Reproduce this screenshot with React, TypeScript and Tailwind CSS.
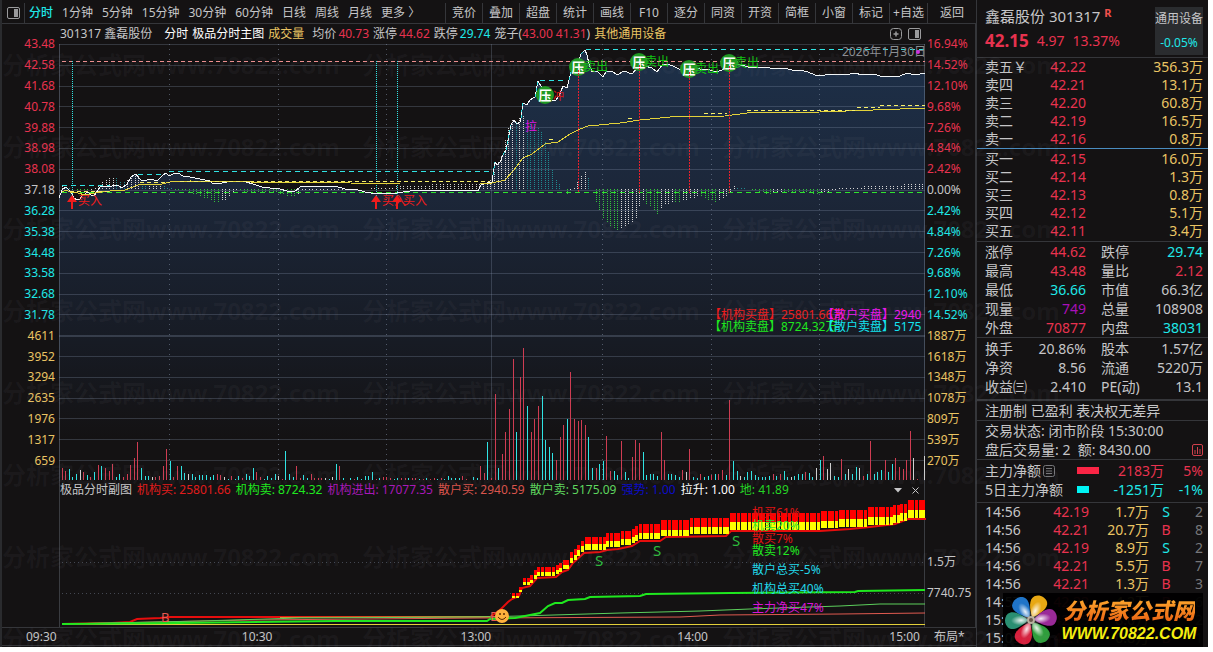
import type { ReactNode } from "react";

type Point = [number, number];

const CYAN = "#30e4e4";

const tone: Record<string, string> = {
  r: "text-[#e8324f]",
  c: "text-[#1fe8e8]",
  y: "text-[#eac463]",
  m: "text-[#a810b8]",
  g: "text-[#c6c6c8]",
  d: "text-[#77777a]",
};

const periods = ["分时", "1分钟", "5分钟", "15分钟", "30分钟", "60分钟", "日线", "周线", "月线", "更多 〉"];
const tools = ["竞价", "叠加", "超盘", "统计", "画线", "F10", "逐分", "同资", "开资", "简框", "小窗", "标记"];

const priceAxis = ["43.48", "42.58", "41.68", "40.78", "39.88", "38.98", "38.08", "37.18", "36.28", "35.38", "34.48", "33.58", "32.68", "31.78", "4611", "3952", "3294", "2635", "1976", "1317", "659"];
const percentAxis = ["16.94%", "14.52%", "12.10%", "9.68%", "7.26%", "4.84%", "2.42%", "0.00%", "2.42%", "4.84%", "7.26%", "9.68%", "12.10%", "14.52%", "1887万", "1618万", "1348万", "1078万", "809万", "539万", "270万"];

const asks = [
  ["卖五￥", "42.22", "356.3万"],
  ["卖四", "42.21", "13.1万"],
  ["卖三", "42.20", "60.8万"],
  ["卖二", "42.19", "16.5万"],
  ["卖一", "42.16", "0.8万"],
];
const bids = [
  ["买一", "42.15", "16.0万"],
  ["买二", "42.14", "1.3万"],
  ["买三", "42.13", "0.8万"],
  ["买四", "42.12", "5.1万"],
  ["买五", "42.11", "3.4万"],
];

const stats = [
  ["涨停", "44.62", "r", "跌停", "29.74", "c"],
  ["最高", "43.48", "r", "量比", "2.12", "r"],
  ["最低", "36.66", "c", "市值", "66.3亿", "g"],
  ["现量", "749", "m", "总量", "108908", "g"],
  ["外盘", "70877", "r", "内盘", "38031", "c"],
];
const basics = [
  ["换手", "20.86%", "g", "股本", "1.57亿", "g"],
  ["净资", "8.56", "g", "流通", "5220万", "g"],
  ["收益㈢", "2.410", "g", "PE(动)", "13.1", "g"],
];

const ticks = [
  ["14:56", "42.19", "1.7万", "S", "2"],
  ["14:56", "42.21", "20.7万", "B", "8"],
  ["14:56", "42.19", "8.9万", "S", "2"],
  ["14:56", "42.21", "5.5万", "B", "7"],
  ["14:56", "42.21", "1.3万", "B", "3"],
  ["14:57", "42.22", "4.2万", "B", "6"],
  ["15:00", "42.15", "8.0万", "S", "2"],
  ["15:05", "42.15", "0.8万", "B", "1"],
];

const price =
  "59,198 62,190 66,187 71,192 74,198 77,200 80,199 83,195 88,192 91,195 94,196 98,190 101,186 106,187 112,186 118,185 122,188 127,184 131,177 136,174 138,177 142,181 147,180 151,179 157,181 162,176 166,173 169,176 173,174 178,173 183,176 190,177 200,179 210,181 213,184 222,183 233,181 246,182 253,184 262,187 270,188 280,189 287,191 294,192 300,187 310,186 320,187 335,186 345,189 355,189 365,192 377,194 385,193 397,193 410,191 420,190 440,191 460,190 478,191 481,185 487,183 492,182 493,175 495,162 497,165 500,162 503,155 506,150 508,140 511,125 514,120 517,124 520,122 521,118 523,103 527,105 530,100 535,97 538,81 541,86 545,92 548,98 552,100 556,100 559,96 563,86 567,88 569,80 571,72 574,66 578,63 581,54 585,50 587,55 589,64 592,72 597,71 603,77 606,72 612,71 617,75 624,71 632,74 637,68 640,60 645,66 652,68 657,72 662,65 668,64 675,67 685,72 692,68 700,69 710,70 716,72 722,70 728,64 735,64 745,66 752,68 765,67 775,69 785,68 795,71 800,70 808,72 815,75 825,75 835,74 845,75 855,73 862,75 875,74 882,77 890,76 900,76 907,73 915,75 925,73";
const average =
  "62,192 66,190 70,192 78,193 85,195 95,193 110,191 125,190 133,187 140,184 162,184 170,182 190,181 250,182 350,183 400,184 480,184 492,183 505,180 513,171 523,158 532,154 545,144 558,142 570,134 580,129 588,126 620,123 640,120 670,117 725,116 747,113 820,112 900,109 925,108";

const momentum: Point[] = [
  [62, 3], [78, -2], [90, -5], [98, 4], [112, 13], [122, 7], [137, 14], [145, 4], [160, 4], [168, 2], [176, -1], [188, -2], [200, -8], [218, -14], [226, -10], [236, -2], [246, -3], [270, -3], [294, -8], [302, -2], [350, -1], [400, 3], [440, 5], [484, 6], [492, 12], [496, 24], [502, 36], [509, 66], [513, 72], [516, 68], [521, 75], [524, 72], [538, 62], [542, 56], [549, 34], [553, 14], [560, 3], [563, 0], [567, -5], [574, 2], [581, 14], [585, 17], [589, 11], [592, 0], [594, -5], [597, -18], [602, -28], [610, -38], [617, -42], [625, -38], [635, -32], [639, -18], [643, -12], [650, -18], [657, -25], [664, -16], [672, -13], [680, -14], [689, -9], [700, -8], [714, -13], [722, -11], [729, -5], [733, 3], [745, 1], [760, -3], [768, -5], [780, -3], [800, -3], [815, -5], [825, -4], [840, 1], [870, 3], [895, 3], [910, 6], [924, 6],
];

// x:height + colour (r up, c down, w flat)
const volume =
  "62:12r 65:9r 69:11c 72:3c 76:6c 80:10w 83:8r 87:5c 90:3r 94:8c 98:15r 101:14c 105:12r 109:9r 112:16r 116:3c 119:6c 123:3r 127:6r 130:15r 134:22r 137:38r 141:12c 145:4c 148:4c 152:3w 155:3r 159:4r 163:14r 166:31r 170:19c 173:3r 177:14r 181:14c 184:7c 188:6w 192:6c 195:3c 199:5c 202:5c 206:5c 210:3c 213:5c 217:6r 220:5r 224:3w 228:1c 231:4r 235:1c 238:4c 242:2r 246:6c 249:4c 253:12c 256:8r 260:3r 264:1c 267:4c 271:2c 275:6c 278:4w 282:1r 285:29c 289:6c 293:3c 296:14r 300:2r 303:5c 307:2c 311:6r 314:2r 318:2r 321:2r 325:2w 329:1c 332:3w 336:16c 339:14r 343:2c 350:2c 354:1r 357:3c 361:1c 365:4c 368:4c 372:8c 376:1r 379:2c 383:3r 386:3r 390:2r 394:1c 397:2c 401:2r 405:2r 408:2c 412:2r 415:2r 419:1c 423:1r 426:2c 430:1r 434:2r 437:1c 441:2r 444:1c 448:4c 451:2c 455:2c 459:2c 462:4r 466:1r 473:3c 477:2c 480:14r 484:7r 487:38c 491:2r 495:86r 498:12c 502:26r 505:48r 509:71r 513:121r 516:48c 520:103r 523:132r 527:74c 531:48r 534:61r 538:74r 542:84c 545:40c 549:33c 552:27c 556:20r 560:43r 563:55r 567:61c 570:108r 574:61r 578:59r 581:60r 585:55r 588:43c 592:12c 596:12r 599:16c 603:19c 606:44r 610:9r 614:9c 617:5c 621:39r 625:8c 628:2c 632:23r 635:40r 639:37r 643:28c 646:5c 650:6c 653:6c 657:4c 661:48r 664:20r 668:6c 671:6c 675:5c 679:3c 682:10r 686:8w 689:31r 693:3c 697:2c 700:6r 704:3c 708:4c 711:5r 715:6c 718:6r 722:10r 726:5c 729:80r 733:19c 737:9c 740:4w 744:3c 747:8c 751:9c 755:5c 758:3c 762:3c 765:3c 769:4c 773:6r 776:4c 780:6r 784:9c 787:3c 791:3w 794:4c 798:6c 802:6c 805:8r 809:7c 812:3c 816:12w 820:20c 823:24r 827:11w 830:17w 834:4c 838:3c 841:21r 845:6c 848:11w 852:6c 856:13c 859:12w 863:4r 867:6c 870:39r 874:6c 877:8c 881:10c 885:20r 888:8c 892:16c 895:22r 899:13r 903:11r 906:20r 910:49r 913:22w 917:1r 924:24w";

const volumeBars = volume.split(" ").map((item) => {
  const [x, rest] = item.split(":");
  return { x: Number(x), h: parseInt(rest, 10), color: rest.slice(-1) };
});
const volumeColor: Record<string, string> = { r: "#cf3c52", c: CYAN, w: "#d0d0d0" };

// start x, red top, yellow top, yellow bottom
const flow = [
  [512, 593, 596, 598], [519, 587, 590, 592], [522, 578, 582, 585], [530, 575, 580, 583], [534, 570, 575, 579], [537, 567, 572, 576], [555, 565, 570, 574], [559, 563, 568, 572], [562, 560, 565, 569], [569, 552, 558, 563], [573, 549, 555, 560], [577, 545, 550, 556], [581, 541, 546, 552], [584, 537, 544, 550], [605, 533, 541, 547], [620, 531, 539, 545], [631, 529, 537, 543], [635, 526, 535, 541], [638, 524, 533, 539], [660, 520, 530, 536], [687, 518, 527, 534], [728, 513, 522, 530], [821, 511, 521, 528], [839, 510, 519, 527], [868, 507, 517, 525], [892, 505, 515, 523], [900, 504, 513, 521], [908, 500, 510, 518],
];

function valueAt(points: Point[], x: number) {
  const i = points.findIndex((p) => p[0] >= x);
  if (i <= 0) return points[0][1];
  const [x0, y0] = points[i - 1];
  const [x1, y1] = points[i];
  return y0 + ((y1 - y0) * (x - x0)) / (x1 - x0);
}

const momentumBars = Array.from({ length: 238 }, (_, i) => {
  const x = 62 + Math.round(i * 3.63);
  const v = valueAt(momentum, Math.min(x, 924));
  const prev = valueAt(momentum, Math.min(Math.max(x - 4, 62), 924));
  const color = v >= 0 ? (v >= prev ? "#d6d6d6" : "#1f8a90") : v <= prev ? "#33c23a" : "#d6d6d6";
  return { x, v, color };
}).filter((b) => b.x < 925);

const flowBars = Array.from({ length: 115 }, (_, i) => {
  const x = 512 + Math.round(i * 3.63);
  const level = flow.filter((f) => f[0] <= x).pop()!;
  return { x, top: level[1], mid: level[2], bottom: level[3] };
}).filter((b) => b.x < 925);

const gridRows = Array.from({ length: 21 }, (_, i) => Math.round(44 + i * 20.8) + 0.5);
const gridCols = [169.5, 278.5, 386.5, 602.5, 711.5, 819.5];

const PanelIcon = () => (
  <svg width="13" height="12" viewBox="0 0 13 12" fill="none" stroke="#9a9a9c">
    <rect x="0.5" y="0.5" width="12" height="11" rx="1.5" />
    <rect x="7" y="2" width="4" height="8" fill="#9a9a9c" stroke="none" />
  </svg>
);

const PressBadge = ({ x, y }: { x: number; y: number }) => (
  <g>
    <circle cx={x} cy={y} r="9" fill="#1f9a22" />
    <text x={x} y={y + 5} fontSize="13" fontWeight="bold" fill="#fff" textAnchor="middle">压</text>
  </g>
);

const BuyMark = ({ x }: { x: number }) => (
  <g fill="#f01c1c">
    <path d={`M${x} 195 l5 7 h-4 v7 h-2 v-7 h-4z`} />
    <text x={x + 6} y="205" fontSize="12">买入</text>
  </g>
);

const MainChart = () => (
  <svg className="block h-[437px] w-full" viewBox="59 44 866 437" preserveAspectRatio="none">
    <defs>
      <linearGradient id="area" gradientUnits="userSpaceOnUse" x1="0" y1="50" x2="0" y2="440">
        <stop offset="0" stopColor="#1d3049" />
        <stop offset="0.35" stopColor="#1c273a" />
        <stop offset="0.75" stopColor="#171b24" />
        <stop offset="1" stopColor="#141213" />
      </linearGradient>
    </defs>
    <polygon points={`${price} 925,440 59,440`} fill="url(#area)" />
    <g stroke="#8a98b0" strokeOpacity="0.28" shapeRendering="crispEdges">
      {gridRows.map((y) => (
        <line key={y} x1="59" x2="925" y1={y} y2={y} />
      ))}
      <line x1="59" x2="925" y1="336.5" y2="336.5" />
      <line x1="491.5" x2="491.5" y1="44" y2="480" />
      {gridCols.map((x) => (
        <line key={x} x1={x} x2={x} y1="44" y2="480" strokeDasharray="1 4" strokeOpacity="0.5" />
      ))}
      <line x1="59.5" x2="59.5" y1="44" y2="481" strokeOpacity="0.4" />
      <line x1="924.5" x2="924.5" y1="44" y2="481" strokeOpacity="0.4" />
    </g>

    <g shapeRendering="crispEdges">
      {momentumBars.map((b) => (
        <line key={b.x} x1={b.x + 0.5} x2={b.x + 0.5} y1="189" y2={189 - b.v} stroke={b.color} strokeDasharray="1 1" />
      ))}
    </g>

    <g fill="none" shapeRendering="crispEdges">
      <path d="M62 61.5H925" stroke="#ef8f8f" strokeDasharray="4 3" />
      <path d="M62 192.5H925" stroke="#2fe32f" strokeDasharray="5 4" />
      <path d="M62 185.5H110M138 174.5H162M169 171.5H491M540 80.5H567M586 49.5H925" stroke={CYAN} strokeDasharray="5 4" />
      <path d="M72.5 61V196M376.5 61V196M397.5 61V196" stroke={CYAN} strokeDasharray="1 1" />
      <polyline points={price} stroke="#f4f8fa" />
      <path d="M493 175L495 162M503 155L506 150L508 140L511 125M521 118L523 103M535 97L538 81M569 80L571 72M581 54L585 50" stroke={CYAN} strokeDasharray="3 3" />
      <polyline points={average} stroke="#e2d23a" />
      <path d="M70 191.5H110M140 182.5H170M180 181.5H490M549 139.5H556M628 118.5H632M704 113.5H727M747 110.5H855M857 107.5H880M880 105.5H925" stroke="#f6ef6a" strokeDasharray="4 3" />
    </g>

    <text x="842" y="56" fontSize="12" fill="#8b8d92">2026年1月30日</text>
    <circle cx="918" cy="52" r="2" fill="#d030e0" />
    <text x="553" y="100" fontSize="11" fill="#e01818">冲</text>
    <text x="525" y="131" fontSize="12" fill="#e010e0">拉</text>
    <PressBadge x={545} y={95} />
    <PressBadge x={578} y={67} />
    <PressBadge x={639} y={62} />
    <PressBadge x={689} y={69} />
    <PressBadge x={729} y={63} />
    <path
      d="M578.5 70V193M639.5 65V193M689.5 72V193M729.5 66V193"
      fill="none"
      stroke="#e8202c"
      strokeDasharray="2 1"
      shapeRendering="crispEdges"
    />
    <g fontSize="12" fill="#12c412">
      <text x="584" y="71">卖出</text>
      <text x="645" y="66">卖出</text>
      <text x="695" y="73">卖出</text>
      <text x="735" y="67">卖出</text>
    </g>
    <BuyMark x={72} />
    <BuyMark x={376} />
    <BuyMark x={397} />
    <g fontSize="12">
      <text x="709" y="319" fill="#ee1c1c">【机构买盘】25801.66万</text>
      <text x="709" y="331" fill="#1fe81f">【机构卖盘】8724.32万</text>
      <text x="822" y="319" fill="#f014f0">【散户买盘】2940</text>
      <text x="822" y="331" fill="#14e4f0">【散户卖盘】5175</text>
    </g>

    <g shapeRendering="crispEdges">
      {volumeBars.map((b) => (
        <rect key={b.x} x={b.x} y={480 - b.h} width="1" height={b.h} fill={volumeColor[b.color]} />
      ))}
    </g>
  </svg>
);

const FlowChart = () => (
  <svg className="block h-[128px] w-full overflow-visible" viewBox="59 499 866 128" preserveAspectRatio="none">
    <g stroke="#8a98b0" strokeOpacity="0.4" strokeDasharray="1 3" shapeRendering="crispEdges">
      <line x1="62" x2="925" y1="562.5" y2="562.5" />
      <line x1="62" x2="925" y1="593.5" y2="593.5" />
    </g>
    <g stroke="#3a3c41" shapeRendering="crispEdges">
      <line x1="59.5" x2="59.5" y1="481" y2="627" />
      <line x1="924.5" x2="924.5" y1="481" y2="627" />
    </g>
    <g fill="none">
      <path d="M62 624.5H925" stroke="#e2cf3a" shapeRendering="crispEdges" />
      <polyline points="62,624 112,623 130,622 137,619 160,618 170,617 300,617 490,617 500,610 508,602 512,599 519,596 522,588 530,586 537,578 556,577 562,572 568,570 573,563 584,553 600,552 607,550 618,549 632,546 640,541 660,541 666,537 726,536 731,531 820,531 850,529 870,527 895,524 908,519 926,519" stroke="#e60d0d" strokeWidth="2" />
      <polyline points="280,617.5 490,616.5" stroke="#c9a03a" />
      <polyline points="62,624 250,620 480,618 680,617 720,615 840,614 925,613" stroke="#e05a50" />
      <polyline points="62,624 200,621 300,618 480,617 520,616 620,613 700,611 750,609 840,606 880,604 925,604" stroke="#5ccf5c" />
      <polyline points="62,624 178,623 335,621 487,621 490,619 515,618 525,616 540,613 548,606 555,603 562,603 568,600 585,599 590,597 640,596 646,594 730,593 855,592 858,591 925,590" stroke="#1fe81f" strokeWidth="2" />
    </g>
    <g shapeRendering="crispEdges">
      {flowBars.map((b) => (
        <g key={b.x}>
          <rect x={b.x} y={b.top} width="3" height={b.mid - b.top} fill="#ff0000" />
          <rect x={b.x} y={b.mid} width="3" height={b.bottom - b.mid} fill="#ffff00" />
        </g>
      ))}
    </g>
    <g fontSize="15" fill="#2dbb3c">
      <text x="595" y="566">S</text>
      <text x="653" y="556">S</text>
      <text x="732" y="546">S</text>
    </g>
    <g fontSize="13" fill="#e85a52">
      <text x="161" y="622">B</text>
      <text x="490" y="621">B</text>
    </g>
    <circle cx="502" cy="616" r="7" fill="#ffb13d" />
    <circle cx="500" cy="614" r="1" fill="#5a2a00" />
    <circle cx="504" cy="614" r="1" fill="#5a2a00" />
    <path d="M498 617q4 5 8 0" fill="none" stroke="#5a2a00" />
    <g fontSize="12">
      <text x="752" y="517" fill="#e01414">机买61%</text>
      <text x="752" y="530" fill="#2be02b">机卖20%</text>
      <text x="752" y="543" fill="#e01414">散买7%</text>
      <text x="752" y="555" fill="#1fe81f">散卖12%</text>
      <text x="752" y="574" fill="#22d8ea">散户总买-5%</text>
      <text x="752" y="593" fill="#22d8ea">机构总买40%</text>
      <text x="752" y="612" fill="#d814d8">主力净买47%</text>
    </g>
  </svg>
);

const Toolbar = () => (
  <nav className="flex h-[21px] shrink-0 items-stretch border-b border-[#35363a] text-[#c6c6c8]">
    <button className="flex w-[23px] items-center justify-center border-r border-[#35363a]" aria-label="面板">
      <PanelIcon />
    </button>
    <div className="flex flex-1 items-center gap-[9px] overflow-hidden pl-1 whitespace-nowrap">
      {periods.map((p, i) => (
        <button key={p} className={i === 0 ? "font-medium text-[#1fe8e8]" : ""}>{p}</button>
      ))}
    </div>
    {tools.map((t) => (
      <button key={t} className="w-[37px] shrink-0 border-l border-[#35363a]">{t}</button>
    ))}
    <button className="w-[38px] shrink-0 border-l border-[#35363a] whitespace-nowrap">+自选</button>
    <button className="w-[49px] shrink-0 border-l border-[#35363a]">返回</button>
  </nav>
);

const ChartHeader = () => (
  <div className="flex h-5 items-center gap-1 overflow-hidden whitespace-nowrap text-[#c6c6c8]">
    <span className="pl-px">301317 鑫磊股份</span>
    <span className="pl-2 text-white">分时</span>
    <span className="text-white">极品分时主图</span>
    <span className="text-[#eac463]">成交量</span>
    <span className="pl-1">均价<b className="pl-0.5 font-normal text-[#e8324f]">40.73</b></span>
    <span>涨停<b className="pl-0.5 font-normal text-[#e8324f]">44.62</b></span>
    <span>跌停<b className="pl-0.5 font-normal text-[#1fe8e8]">29.74</b></span>
    <span>笼子(<b className="font-normal text-[#e8324f]">43.00 41.31</b>)</span>
    <span className="text-[#eac463]">其他通用设备</span>
    <div className="ml-auto flex items-center gap-1.5 pr-1">
      <button aria-label="加入">
        <svg width="12" height="12" viewBox="0 0 12 12" fill="none" stroke="#9a9a9c">
          <rect x="0.5" y="0.5" width="11" height="11" rx="3" />
          <path d="M3.5 6h5M6 3.5v5" strokeWidth="1.5" />
        </svg>
      </button>
      <button aria-label="侧栏"><PanelIcon /></button>
    </div>
  </div>
);

const FlowHeader = () => (
  <div className="flex h-[18px] items-center gap-[5px] overflow-hidden whitespace-nowrap">
    <span className="pl-px text-[#c6c6c8]">极品分时副图</span>
    <span className="text-[#e01c1c]">机构买: 25801.66</span>
    <span className="text-[#1fe81f]">机构卖: 8724.32</span>
    <span className="text-[#a818b8]">机构进出: 17077.35</span>
    <span className="text-[#d9544c]">散户买: 2940.59</span>
    <span className="text-[#5fd65f]">散户卖: 5175.09</span>
    <span className="text-[#0c0cc8]">强势: 1.00</span>
    <span className="text-white">拉升: 1.00</span>
    <span className="text-[#25d425]">地: 41.89</span>
    <div className="ml-auto flex items-center gap-2.5 pr-1.5">
      <button aria-label="展开">
        <svg width="8" height="5" viewBox="0 0 8 5"><path d="M0 0h8L4 4.5z" fill="#c6c6c8" /></svg>
      </button>
      <button aria-label="关闭">
        <svg width="7" height="7" viewBox="0 0 7 7"><path d="M0.5 0.5l6 6M6.5 0.5l-6 6" stroke="#c6c6c8" /></svg>
      </button>
    </div>
  </div>
);

const Axis = ({ labels, left }: { labels: string[]; left?: boolean }) => (
  <ul className="flex h-[437px] flex-col">
    {labels.map((label, i) => (
      <li
        key={i}
        className={`flex flex-1 items-center ${left ? "justify-end pr-1" : "pl-0.5"} ${
          i < 7 ? tone.r : i === 7 ? tone.g : i < 14 ? tone.c : tone.y
        }`}
      >
        {label}
      </li>
    ))}
  </ul>
);

const Book = ({ rows }: { rows: string[][] }) => (
  <table className="w-full leading-[18px]">
    <tbody>
      {rows.map(([name, value, amount]) => (
        <tr key={name}>
          <td className="w-14 p-0 whitespace-nowrap">{name}</td>
          <td className="w-[45px] p-0 text-right text-[#e8324f]">{value}</td>
          <td className="p-0 text-right text-[#eac463]">{amount}</td>
        </tr>
      ))}
    </tbody>
  </table>
);

const Stats = ({ rows }: { rows: string[][] }) => (
  <table className="w-full table-fixed leading-[19px] whitespace-nowrap">
    <tbody>
      {rows.map(([a, av, at, b, bv, bt]) => (
        <tr key={a}>
          <td className="w-[46px] p-0">{a}</td>
          <td className={`w-[55px] p-0 text-right ${tone[at]}`}>{av}</td>
          <td className="w-[62px] p-0 pl-[15px]">{b}</td>
          <td className={`p-0 text-right ${tone[bt]}`}>{bv}</td>
        </tr>
      ))}
    </tbody>
  </table>
);

const Section = ({ children, className = "" }: { children: ReactNode; className?: string }) => (
  <section className={`border-b border-[#35363a] pr-[5px] pl-2 ${className}`}>{children}</section>
);

const petals = [
  ["#1f74c8", -35],
  ["#e8a814", 25],
  ["#9a2a98", 82],
  ["#2f9e3c", 145],
  ["#d81f3c", 205],
  ["#2a8f72", 268],
] as const;

const SiteLogo = () => (
  <div className="absolute right-[5px] bottom-0 flex h-[54px] w-[200px] items-center bg-black/95">
    <svg width="56" height="54" viewBox="-28 -27 56 54" className="shrink-0">
      <defs>
        <radialGradient id="shine" cx="0.5" cy="0.65" r="0.5">
          <stop offset="0" stopColor="#fff" stopOpacity="0.9" />
          <stop offset="1" stopColor="#fff" stopOpacity="0" />
        </radialGradient>
      </defs>
      {petals.map(([fill, angle]) => (
        <g key={fill} transform={`rotate(${angle})`}>
          <path d="M0 -3C-6 -9 -11 -18 -7 -23C-3 -27 3 -27 7 -23C11 -18 6 -9 0 -3Z" fill={fill} />
          <ellipse cx="0" cy="-13" rx="5" ry="10" fill="url(#shine)" />
        </g>
      ))}
      <circle r="4" fill="#b8b0a0" />
      <circle r="2" fill="#6a5648" />
    </svg>
    <div className="flex flex-1 flex-col items-center pr-1">
      <span className="bg-gradient-to-b from-[#ffb030] to-[#e85a10] bg-clip-text text-[22px] leading-7 font-black text-transparent italic">分析家公式网</span>
      <span className="font-['Liberation_Sans'] text-base leading-5 font-bold text-[#f4ee10] italic">WWW.70822.COM</span>
    </div>
  </div>
);

const QuotePanel = () => (
  <aside className="relative flex w-[232px] shrink-0 flex-col overflow-hidden border-l border-[#35363a] text-sm text-[#c6c6c8]">
    <Section className="flex h-[58px] justify-between">
      <div className="whitespace-nowrap">
        <h1 className="pt-[5px] text-[15px] leading-[22px]">
          鑫磊股份 301317 <sup className="text-[11px] font-bold text-[#f0504c]">R</sup>
        </h1>
        <p className="flex items-center gap-2 leading-7 text-[#e8324f]">
          <b className="text-[17px]">42.15</b>
          <span>4.97</span>
          <span>13.37%</span>
        </p>
      </div>
      <div className="mt-[7px] h-12 w-12 bg-[#2a2c2f] text-center text-xs leading-6">
        <div>通用设备</div>
        <div className="text-[#1fe8e8]">-0.05%</div>
      </div>
    </Section>
    <section className="border-b border-[#4a8cc0] pr-[5px] pl-2"><Book rows={asks} /></section>
    <Section className="py-px"><Book rows={bids} /></Section>
    <Section><Stats rows={stats} /></Section>
    <Section className="border-b-2 pt-px pb-[3px]"><Stats rows={basics} /></Section>
    <Section className="leading-[19px]">注册制 已盈利 表决权无差异</Section>
    <Section className="leading-[19px]">
      <p>交易状态: 闭市阶段 15:30:00</p>
      <p className="flex items-center justify-between whitespace-pre">
        盘后交易量: 2  额: 8430.00
        <svg width="11" height="12" viewBox="0 0 11 12" fill="none" stroke="#d0404c">
          <rect x="0.5" y="0.5" width="10" height="11" rx="1.5" />
          <path d="M3 10V6M5.5 10V3M8 10V5" />
        </svg>
      </p>
    </Section>
    <Section className="pt-px pb-[3px]">
      <table className="w-full table-fixed leading-[19px] whitespace-nowrap">
        <tbody>
          <tr>
            <td className="w-[92px] p-0">
              <span className="flex items-center gap-0.5">
                主力净额
                <svg width="12" height="12" viewBox="0 0 12 12" fill="none" stroke="#77777a">
                  <rect x="0.5" y="0.5" width="11" height="11" rx="2" />
                  <path d="M3 3.5h6M3 6h6M3 8.5h6" />
                </svg>
              </span>
            </td>
            <td className="w-[26px] p-0"><div className="h-[7px] w-[22px] bg-[#fb2545]" /></td>
            <td className="w-[61px] p-0 text-right text-[#e8324f]">2183万</td>
            <td className="p-0 text-right text-[#e8324f]">5%</td>
          </tr>
          <tr>
            <td className="p-0">5日主力净额</td>
            <td className="p-0"><div className="h-[7px] w-3 bg-[#00f4f4]" /></td>
            <td className="p-0 text-right text-[#1fe8e8]">-1251万</td>
            <td className="p-0 text-right text-[#1fe8e8]">-1%</td>
          </tr>
        </tbody>
      </table>
    </Section>
    <table className="ml-2 w-[218px] table-fixed leading-[18px]">
      <tbody>
        {ticks.map(([time, value, amount, side, count], i) => (
          <tr key={i}>
            <td className="w-[50px] p-0">{time}</td>
            <td className="w-[54px] p-0 text-right text-[#e8324f]">{value}</td>
            <td className="w-[60px] p-0 text-right text-[#eac463]">{amount}</td>
            <td className={`w-[34px] p-0 text-center ${side === "S" ? tone.c : tone.r}`}>{side}</td>
            <td className={`p-0 text-right ${tone.d}`}>{count}</td>
          </tr>
        ))}
      </tbody>
    </table>
    <SiteLogo />
  </aside>
);

const Watermark = () => (
  <div className="pointer-events-none absolute inset-0 overflow-hidden pt-6" aria-hidden="true">
    {Array.from({ length: 8 }, (_, row) => (
      <div key={row} className="flex h-[82px] items-center gap-[17px] pl-0.5 text-2xl font-bold whitespace-nowrap text-[#8c8c96]/7">
        {[0, 1, 2].map((col) => (
          <span key={col} className="w-[343px] shrink-0">分析家公式网www.70822.com</span>
        ))}
      </div>
    ))}
  </div>
);

export default function App() {
  return (
    <div className="min-h-screen bg-white pr-[5px] pb-[3px] font-['Noto_Sans','Noto_Sans_CJK_SC',sans-serif] text-xs" lang="zh-CN">
      <div className="relative flex overflow-hidden bg-[#141213]">
        <main className="flex min-w-0 flex-1 flex-col border-l-2 border-[#2a2b2e] pt-[3px]">
          <Toolbar />
          <div className="flex border-r border-[#35363a]">
            <div className="w-[57px] shrink-0 pt-2.5">
              <Axis labels={priceAxis} left />
            </div>
            <div className="min-w-0 flex-1">
              <ChartHeader />
              <MainChart />
              <FlowHeader />
              <FlowChart />
            </div>
            <div className="w-[50px] shrink-0 pt-2.5 leading-5">
              <Axis labels={percentAxis} />
              <div className="pt-[81px] pl-0.5 text-[#c6c6c8]">1.5万</div>
              <div className="pt-[11px] pl-0.5 text-[#c6c6c8]">7740.75</div>
            </div>
          </div>
          <div className="flex h-[19px] items-center border-y border-[#35363a] text-[#c6c6c8]">
            <div className="grid flex-1 grid-cols-[216fr_219fr_217fr_auto] pr-1.5 pl-6">
              <span>09:30</span>
              <span>10:30</span>
              <span>13:00</span>
              <span className="flex justify-between"><span className="w-[212px]">14:00</span>15:00</span>
            </div>
            <button className="w-[50px] pl-2 text-left">布局*</button>
          </div>
        </main>
        <QuotePanel />
        <Watermark />
      </div>
    </div>
  );
}
